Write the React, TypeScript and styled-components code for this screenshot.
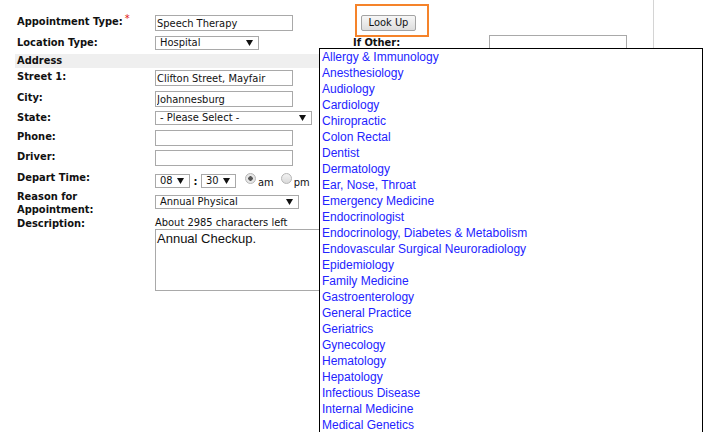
import React from 'react';
import styled, { createGlobalStyle } from 'styled-components';

const GlobalStyle = createGlobalStyle`
  html, body {
    margin: 0;
    padding: 0;
    background: #fff;
  }
  body {
    font-family: "DejaVu Sans Condensed", "DejaVu Sans", Verdana, sans-serif;
    font-size: 11px;
    color: #111;
  }
  * {
    box-sizing: border-box;
  }
`;

const uiFont = `"DejaVu Sans Condensed", "DejaVu Sans", Verdana, sans-serif`;

const specialties = [
  'Allergy & Immunology',
  'Anesthesiology',
  'Audiology',
  'Cardiology',
  'Chiropractic',
  'Colon Rectal',
  'Dentist',
  'Dermatology',
  'Ear, Nose, Throat',
  'Emergency Medicine',
  'Endocrinologist',
  'Endocrinology, Diabetes & Metabolism',
  'Endovascular Surgical Neuroradiology',
  'Epidemiology',
  'Family Medicine',
  'Gastroenterology',
  'General Practice',
  'Geriatrics',
  'Gynecology',
  'Hematology',
  'Hepatology',
  'Infectious Disease',
  'Internal Medicine',
  'Medical Genetics',
];

const Arrow = () => (
  <svg width="7" height="6" viewBox="0 0 7 6">
    <polygon points="0,0 7,0 3.5,6" fill="#111" />
  </svg>
);

const Select = ({ value, width }: { value: string; width: number }) => (
  <SelectBox $w={width}>
    <span>{value}</span>
    <Arrow />
  </SelectBox>
);

const App = () => {
  return (
    <>
      <GlobalStyle />
      <Page>
        <Main>
          <Row $h={21}>
            <Label>
              Appointment Type:<Required>*</Required>
            </Label>
            <Field $w={196}>
              <TextInput $w={138} defaultValue="Speech Therapy" />
            </Field>
            <ButtonCell>
              <Highlight />
              <LookUpButton>Look Up</LookUpButton>
            </ButtonCell>
          </Row>
          <Row $h={18}>
            <Label>Location Type:</Label>
            <Field $w={196}>
              <Select value="Hospital" width={104} />
            </Field>
            <Label $w={138}>If Other:</Label>
            <Field $top={-1}>
              <TextInput $w={138} defaultValue="" />
            </Field>
          </Row>
          <SectionBand>Address</SectionBand>
          <Row $h={21}>
            <Label>Street 1:</Label>
            <Field>
              <TextInput $w={138} defaultValue="Clifton Street, Mayfair" />
            </Field>
          </Row>
          <Row $h={20}>
            <Label>City:</Label>
            <Field>
              <TextInput $w={138} defaultValue="Johannesburg" />
            </Field>
          </Row>
          <Row $h={19}>
            <Label>State:</Label>
            <Field>
              <Select value="- Please Select -" width={157} />
            </Field>
          </Row>
          <Row $h={20}>
            <Label>Phone:</Label>
            <Field>
              <TextInput $w={138} defaultValue="" />
            </Field>
          </Row>
          <Row $h={21}>
            <Label>Driver:</Label>
            <Field>
              <TextInput $w={138} defaultValue="" />
            </Field>
          </Row>
          <Row $h={19}>
            <Label>Depart Time:</Label>
            <Field $top={2}>
              <Select value="08" width={35} />
              <Colon>:</Colon>
              <Select value="30" width={35} />
              <Radio $checked />
              <RadioText>am</RadioText>
              <Radio />
              <RadioText>pm</RadioText>
            </Field>
          </Row>
          <Row $h={27}>
            <Label>
              Reason for
              <br />
              Appointment:
            </Label>
            <Field $top={5}>
              <Select value="Annual Physical" width={144} />
            </Field>
          </Row>
          <Row $h={80}>
            <Label>Description:</Label>
            <DescField>
              <CharsLeft>About 2985 characters left</CharsLeft>
              <Description defaultValue="Annual Checkup." />
            </DescField>
          </Row>
        </Main>

        <SpecialtyList>
          {specialties.map((s) => (
            <SpecialtyItem key={s}>{s}</SpecialtyItem>
          ))}
        </SpecialtyList>
      </Page>
    </>
  );
};

export default App;

const Page = styled.div`
  position: relative;
  width: 705px;
  height: 432px;
  overflow: hidden;
`;

const Main = styled.div`
  width: 654px;
  height: 432px;
  border-right: 1px solid #d4d4d4;
  padding: 15px 0 0 15px;
`;

const Row = styled.div<{ $h: number }>`
  display: flex;
  align-items: flex-start;
  height: ${(p) => p.$h}px;
`;

const Label = styled.div<{ $w?: number }>`
  width: ${(p) => p.$w ?? 140}px;
  flex-shrink: 0;
  padding-left: 2px;
  font-weight: bold;
  line-height: 13px;
  white-space: nowrap;
`;

const Required = styled.span`
  color: #e01010;
  font-weight: normal;
  font-size: 11px;
  position: relative;
  top: -3px;
  margin-left: 2px;
`;

const Field = styled.div<{ $w?: number; $top?: number }>`
  display: flex;
  align-items: center;
  flex-shrink: 0;
  width: ${(p) => (p.$w ? `${p.$w}px` : 'auto')};
  margin-top: ${(p) => p.$top ?? 0}px;
`;

const TextInput = styled.input<{ $w: number }>`
  width: ${(p) => p.$w}px;
  height: 16px;
  border: 1px solid #a9a9a9;
  padding: 0 1px;
  margin: 0;
  font-family: ${uiFont};
  font-size: 11px;
  color: #111;
  background: #fff;
  outline: none;
`;

const SelectBox = styled.div<{ $w: number }>`
  width: ${(p) => p.$w}px;
  height: 14px;
  border: 1px solid #a9a9a9;
  background: #fff;
  display: flex;
  align-items: center;
  justify-content: space-between;
  padding: 0 5px 0 4px;
  line-height: 12px;
  color: #111;
  white-space: nowrap;
  overflow: hidden;
`;

const Colon = styled.span`
  width: 11px;
  text-align: center;
  font-weight: bold;
`;

const Radio = styled.span<{ $checked?: boolean }>`
  width: 11px;
  height: 11px;
  margin: 0 2px 0 9px;
  border-radius: 50%;
  border: 1px solid #b5b5b5;
  background: ${(p) =>
    p.$checked ? 'radial-gradient(circle, #555 0 2px, #e6e6e6 2.5px)' : 'linear-gradient(#f2f2f2, #dadada)'};
  flex-shrink: 0;
  align-self: flex-start;
`;

const RadioText = styled.span`
  line-height: 13px;
  margin-top: 3px;
  margin-right: -2px;
`;

const ButtonCell = styled.div`
  position: relative;
  padding-left: 10px;
`;

const Highlight = styled.span`
  position: absolute;
  left: 4px;
  top: -11px;
  width: 74px;
  height: 33px;
  border: 2px solid #f5832a;
  pointer-events: none;
`;

const LookUpButton = styled.button`
  width: 55px;
  height: 16px;
  padding: 0;
  border: 1px solid #a3a3a3;
  border-radius: 2px;
  background: linear-gradient(#f7f7f7, #dddddd);
  font-family: ${uiFont};
  font-size: 11px;
  line-height: 14px;
  color: #111;
`;

const SectionBand = styled.div`
  width: 618px;
  height: 14px;
  margin-bottom: 2px;
  padding-left: 2px;
  background: #efefef;
  font-weight: bold;
  line-height: 14px;
`;

const DescField = styled.div`
  display: flex;
  flex-direction: column;
`;

const CharsLeft = styled.div`
  line-height: 12px;
  white-space: nowrap;
`;

const Description = styled.textarea`
  width: 300px;
  height: 62px;
  margin: 0;
  padding: 1px 1px;
  border: 1px solid #a9a9a9;
  resize: none;
  font-family: "Liberation Sans", Arial, sans-serif;
  font-size: 13px;
  color: #111;
  outline: none;
`;

const SpecialtyList = styled.div`
  position: absolute;
  left: 319px;
  top: 48px;
  width: 384px;
  height: 420px;
  border: 1px solid #000;
  background: #fff;
  padding: 0 2px;
  overflow: hidden;
`;

const SpecialtyItem = styled.div`
  font-family: "Liberation Sans", Arial, sans-serif;
  font-size: 12px;
  line-height: 16px;
  color: #2323ff;
  white-space: nowrap;
`;
